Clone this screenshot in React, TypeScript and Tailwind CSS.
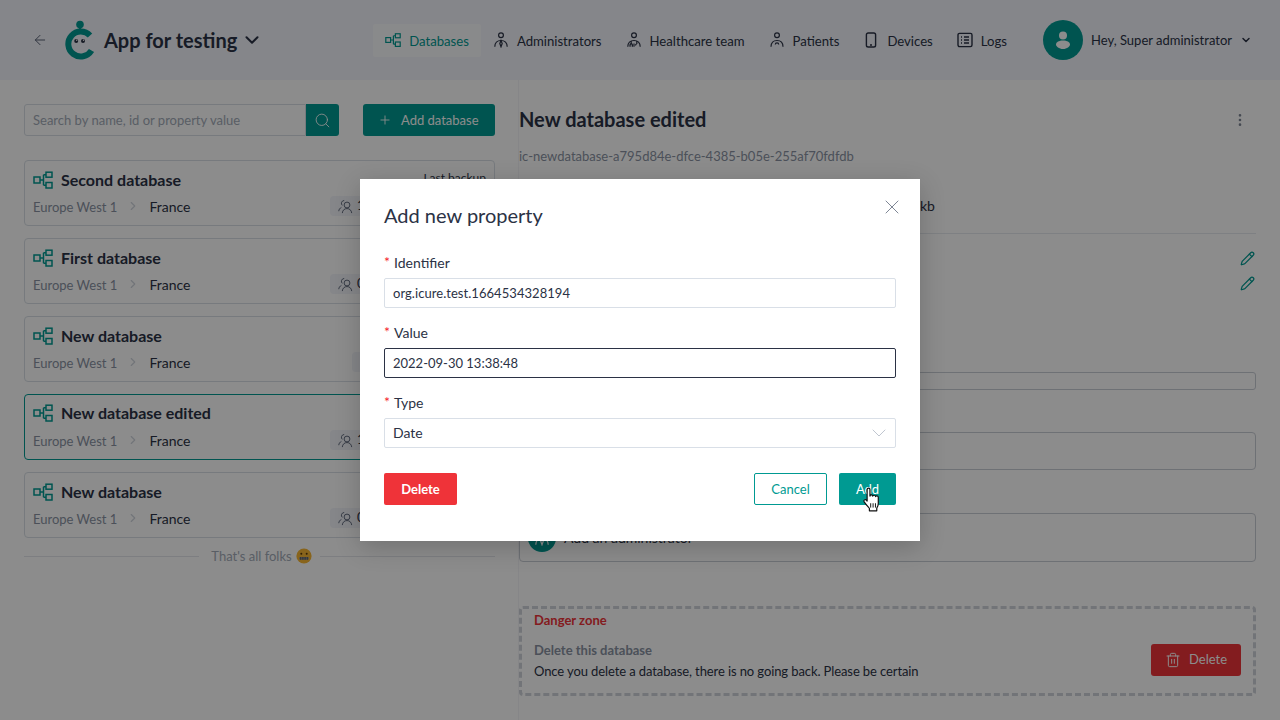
import React from "react";
import { ArrowLeft, ChevronDown, ChevronRight, EllipsisVertical, Pencil, Plus, Search, Trash2, X } from "lucide-react";

function DbIcon({ className }: { className?: string }) {
  return (
    <svg viewBox="0 0 20 18" fill="none" stroke="currentColor" strokeWidth="1.5" className={className}>
      <rect x="1" y="6" width="6" height="6" />
      <rect x="13" y="1.2" width="6" height="5" />
      <rect x="13" y="11.5" width="6" height="5.5" />
      <path d="M7 9h3.5M10.5 3.7V14.2M10.5 3.7H13M10.5 14.2H13" />
    </svg>
  );
}

function Logo() {
  return (
    <svg viewBox="0 0 32 40" className="w-8 h-10 shrink-0">
      <circle cx="16" cy="4.5" r="3.8" fill="#009a92" />
      <rect x="14.8" y="6" width="2.4" height="6" fill="#009a92" />
      <path d="M26 15.5A12.5 12.5 0 1 0 27.5 30.5" fill="none" stroke="#009a92" strokeWidth="6" />
      <circle cx="12.2" cy="21" r="2" fill="#2b3245" />
      <circle cx="19" cy="21" r="2" fill="#2b3245" />
      <circle cx="12.7" cy="20.2" r="0.7" fill="#ffffff" />
      <circle cx="19.5" cy="20.2" r="0.7" fill="#ffffff" />
    </svg>
  );
}

function PersonIcon() {
  return (
    <svg viewBox="0 0 16 16" fill="none" stroke="currentColor" strokeWidth="1.2" className="w-4 h-4 shrink-0">
      <circle cx="8" cy="3.2" r="2.4" />
      <path d="M1.8 14.8c0-4 2.4-6.3 6.2-6.3s6.2 2.3 6.2 6.3" />
      <path d="M8 8.5 6.8 11.5 8 14.8l1.2-3.3z" />
    </svg>
  );
}

function HealthIcon() {
  return (
    <svg viewBox="0 0 16 16" fill="none" stroke="currentColor" strokeWidth="1.2" className="w-4 h-4 shrink-0">
      <circle cx="8" cy="3.2" r="2.4" />
      <path d="M1.8 14.8c0-4 2.4-6.3 6.2-6.3s6.2 2.3 6.2 6.3" />
      <path d="M5.2 9v2.5c-1.2.5-1.4 2-1 3.3M5.2 11.5c1.2.5 1.4 2 1 3.3M10.8 9v3M8 11.5v3.3M10.8 12c-.9 0-1.3.8-1.3 1.6" />
    </svg>
  );
}

function PatientIcon() {
  return (
    <svg viewBox="0 0 16 16" fill="none" stroke="currentColor" strokeWidth="1.2" className="w-4 h-4 shrink-0">
      <circle cx="8" cy="3.2" r="2.4" />
      <path d="M2 14.8c0-4 2.3-6.3 6-6.3s6 2.3 6 6.3" />
      <path d="M6.3 12.5a1.7 1.7 0 0 1 3.4 0" />
    </svg>
  );
}

function PhoneIcon() {
  return (
    <svg viewBox="0 0 16 16" fill="none" stroke="currentColor" strokeWidth="1.4" className="w-4 h-4 shrink-0">
      <rect x="3.4" y="1" width="9.2" height="14" rx="1.8" />
      <path d="M7 13h2" />
    </svg>
  );
}

function LogsIcon() {
  return (
    <svg viewBox="0 0 16 16" fill="none" stroke="currentColor" strokeWidth="1.4" className="w-4 h-4 shrink-0">
      <rect x="1" y="1.4" width="14" height="13.2" rx="1.5" />
      <path d="M4 5h1M7 5h5M4 8h1M7 8h5M4 11h1M7 11h5" />
    </svg>
  );
}

function PeopleIcon() {
  return (
    <svg viewBox="0 0 16 16" fill="none" stroke="#5b6478" strokeWidth="1" className="w-[15px] h-[15px] shrink-0">
      <circle cx="9.6" cy="6.4" r="3.1" />
      <path d="M4.6 15c.3-3 2.2-4.8 5-4.8s4.7 1.8 5 4.8" />
      <path d="M6.6 1.6a3 3 0 0 0-2 5.2M3.6 9C2 9.8 1 11 .8 13" />
    </svg>
  );
}

function ZipEmoji() {
  return (
    <svg viewBox="0 0 16 16" className="w-4 h-4 shrink-0">
      <circle cx="8" cy="8" r="7.6" fill="#f7b733" />
      <circle cx="5.3" cy="5.8" r="1" fill="#5b3a0a" />
      <circle cx="10.7" cy="5.8" r="1" fill="#5b3a0a" />
      <rect x="3.2" y="9" width="9.6" height="2.8" rx="1" fill="#8b8f96" />
      <path d="M4.5 9v2.8M6.3 9v2.8M8 9v2.8M9.7 9v2.8M11.5 9v2.8" stroke="#444" strokeWidth="0.6" />
    </svg>
  );
}

function HandCursor() {
  return (
    <svg viewBox="0 0 20 24" className="absolute left-[861px] top-[487px] w-[22px] h-[26px]">
      <path
        d="M5.5 2.2c0-1.6 2.6-1.6 2.6 0v6.2c.2-1.5 2.5-1.4 2.6.1.3-1.3 2.5-1.2 2.6.3.5-1 2.4-.8 2.5.7v5.7c0 2-.7 3-1.4 4.2v2.6H7.6v-2.2c-1.2-1.5-3-3.4-4.8-6.1-.9-1.5.9-2.8 2-1.6l.7.9z"
        fill="#ffffff"
        stroke="#111111"
        strokeWidth="1.1"
        strokeLinejoin="round"
      />
      <path d="M8.8 15v4M11 15v4M13.2 15v4" stroke="#111111" strokeWidth="0.9" />
    </svg>
  );
}

const navItems = [
  { label: "Administrators", icon: <PersonIcon /> },
  { label: "Healthcare team", icon: <HealthIcon /> },
  { label: "Patients", icon: <PatientIcon /> },
  { label: "Devices", icon: <PhoneIcon /> },
  { label: "Logs", icon: <LogsIcon /> },
];

const databases = [
  { name: "Second database", count: "1", badge: "w-[156px]", selected: false, backup: true },
  { name: "First database", count: "0", badge: "w-[156px]", selected: false, backup: false },
  { name: "New database", count: "0", badge: "w-[134px]", selected: false, backup: false },
  { name: "New database edited", count: "1", badge: "w-[156px]", selected: true, backup: false },
  { name: "New database", count: "0", badge: "w-[156px]", selected: false, backup: false },
];

function DatabaseCard({ db }: { db: (typeof databases)[number] }) {
  return (
    <div
      className={`h-[66px] rounded-[4px] border bg-white pl-2 pr-2 ${
        db.selected ? "border-[#009a92] pt-[6px]" : "border-[#d9dee6] pt-[7px]"
      }`}
    >
      <div className="flex items-center h-6">
        <DbIcon className="w-5 h-[18px] text-[#009a92] shrink-0" />
        <span className="ml-2 text-[16px] font-bold text-[#2b3245]">{db.name}</span>
        {db.backup && <span className="ml-auto self-start mt-[1px] text-[12px] leading-[18px] text-[#2b3245]">Last backup</span>}
      </div>
      <div className={`flex items-center justify-between h-5 ${db.selected ? "mt-[5px]" : "mt-[4px]"}`}>
        <div className="flex items-center">
          <span className="mt-[4px] text-[13px] text-[#8a93a3]">Europe West 1</span>
          <ChevronRight className="w-3.5 h-3.5 mx-[9px] text-[#d0d5dd]" />
          <span className="text-[#2b3245]">France</span>
        </div>
        <div className={`flex items-center h-[20px] rounded-[4px] bg-[#f2f4fa] pl-2 gap-1 text-[13px] text-[#2b3245] ${db.badge}`}>
          <PeopleIcon />
          <span>{db.count}</span>
        </div>
      </div>
    </div>
  );
}

function Field({ label, children }: { label: string; children: React.ReactNode }) {
  return (
    <div>
      <div className="flex items-center h-[18px] text-[14px] text-[#2b3245]">
        <span className="relative -top-[1px] w-[10px] text-[14px] text-[#f5222d]">*</span>
        <span>{label}</span>
      </div>
      <div className="mt-[7px]">{children}</div>
    </div>
  );
}

export default function App() {
  return (
    <div className="relative h-[720px] w-[1280px] overflow-hidden bg-white font-['Lato',sans-serif] text-[14px] text-[#2b3245] whitespace-nowrap">
      {/* Header */}
      <header className="flex items-center h-20 bg-[#f2f4fb] pl-8 pr-7">
        <ArrowLeft className="w-4 h-4 shrink-0 text-[#5b6478]" strokeWidth={1.5} />
        <div className="ml-4">
          <Logo />
        </div>
        <span className="ml-2 text-[20px] font-bold text-[#2b3245]">App for testing</span>
        <ChevronDown className="ml-1 w-[22px] h-[22px] text-[#2b3245]" strokeWidth={2.2} />

        <nav className="ml-auto flex items-center text-[13.15px]">
          <div className="flex items-center gap-2 h-[33px] px-3 rounded-[2px] bg-white/60 text-[#009a92]">
            <DbIcon className="w-4 h-4" />
            <span className="pt-[4px]">Databases</span>
          </div>
          {navItems.map((item) => (
            <div key={item.label} className="flex items-center gap-2 px-3 text-[#2b3245]">
              {item.icon}
              <span className="pt-[4px]">{item.label}</span>
            </div>
          ))}
        </nav>

        <div className="ml-6 flex items-center">
          <div className="flex items-center justify-center w-10 h-10 rounded-full bg-[#009a92]">
            <svg viewBox="0 0 20 20" className="w-5 h-5" fill="#ffffff">
              <circle cx="10" cy="5.5" r="4" />
              <path d="M10 10.5c4 0 7 1.6 7 4 0 2-3 4.5-7 4.5s-7-2.5-7-4.5c0-2.4 3-4 7-4z" />
            </svg>
          </div>
          <span className="ml-2 pt-[2px] text-[13px] text-[#2b3245]">Hey, Super administrator</span>
          <ChevronDown className="ml-2 w-3 h-3 text-[#2b3245]" strokeWidth={3} />
        </div>
      </header>

      <div className="flex h-[640px]">
        {/* Database list */}
        <aside className="w-[519px] shrink-0 border-r border-[#f4f5f8] pl-6 pr-[23px] pt-6">
          <div className="flex items-center text-[13px]">
            <div className="flex items-center w-[282px] h-8 rounded-l-[3px] border border-[#d9dee6] pl-2 pt-[2px] text-[#a3abb8]">
              Search by name, id or property value
            </div>
            <div className="flex items-center justify-center w-[33px] h-8 rounded-r-[3px] bg-[#009a92]">
              <Search className="w-[17px] h-[17px] text-white" strokeWidth={1.25} />
            </div>
            <div className="ml-auto flex items-center w-[132px] h-8 rounded-[3px] bg-[#009a92] pl-[15px] text-white">
              <Plus className="w-[14px] h-[14px]" strokeWidth={1.5} />
              <span className="ml-[9px] pt-[2px]">Add database</span>
            </div>
          </div>

          <div className="mt-6 flex flex-col gap-3">
            {databases.map((db, idx) => (
              <DatabaseCard key={idx} db={db} />
            ))}
          </div>

          <div className="mt-[8px] flex items-center h-5 text-[13px] text-[#a3abb8]">
            <div className="flex-1 h-px bg-[#e3e6ec]" />
            <span className="ml-3 pt-[2px]">That's all folks</span>
            <span className="ml-[4px] mr-2">
              <ZipEmoji />
            </span>
            <div className="flex-1 h-px bg-[#e3e6ec]" />
          </div>
        </aside>

        {/* Database details */}
        <main className="flex-1 pr-6 pt-6 flex flex-col">
          <div className="flex items-center justify-between h-8">
            <h1 className="pb-[2px] text-[20px] font-bold text-[#2b3245]">New database edited</h1>
            <EllipsisVertical className="w-4 h-4 mr-2 text-[#7d8594]" />
          </div>
          <div className="mt-[10px] h-5 text-[13px] leading-5 text-[#8a93a3]">ic-newdatabase-a795d84e-dfce-4385-b05e-255af70fdfdb</div>
          <div className="mt-[30px] h-5 pl-[401px] leading-5">kb</div>
          <div className="mt-[17px] h-px bg-[#e6e9ee]" />
          <div className="mt-[14px] flex justify-end pr-[1px] h-5 items-center">
            <Pencil className="w-[15px] h-[15px] text-[#009a92]" />
          </div>
          <div className="mt-[5px] flex justify-end pr-[1px] h-5 items-center">
            <Pencil className="w-[15px] h-[15px] text-[#009a92]" />
          </div>
          <div className="mt-[79px] h-[18px] rounded-[3px] border border-[#c9ced6]" />
          <div className="mt-[42px] h-[38px] rounded-[4px] border border-[#c9ced6]" />
          <div className="mt-[43px] flex items-center h-[49px] rounded-[4px] border border-[#c9ced6] pl-2">
            <div className="flex items-center justify-center w-7 h-7 rounded-full bg-[#009a92] text-white">
              <PersonIcon />
            </div>
            <span className="ml-2">Add an administrator</span>
          </div>
          <div className="mt-[44px] flex items-start justify-between h-[90px] rounded-[4px] border-[3px] border-dashed border-[#d0d4da] pl-3 pr-[12px]">
            <div>
              <div className="mt-[1px] h-5 text-[13px] leading-5 font-bold text-[#ef3339]">Danger zone</div>
              <div className="mt-[10px] h-5 text-[13px] leading-5 font-bold text-[#8a93a3]">Delete this database</div>
              <div className="mt-[1px] h-5 text-[13px] leading-5 tracking-[-0.1px]">Once you delete a database, there is no going back. Please be certain</div>
            </div>
            <div className="mt-[35px] flex items-center justify-center gap-2 w-[90px] h-8 rounded-[3px] bg-[#ef3339] text-[13px] text-white">
              <Trash2 className="w-4 h-4" strokeWidth={1.5} />
              <span className="pb-[1px]">Delete</span>
            </div>
          </div>
        </main>
      </div>

      {/* Modal */}
      <div className="absolute inset-0 flex items-center justify-center bg-black/45">
        <div className="relative w-[560px] h-[362px] bg-white px-6 pt-[23px] shadow-[0_6px_24px_rgba(0,0,0,0.2)]">
          <X className="absolute right-[16px] top-[16px] w-6 h-6 text-[#7d8594]" strokeWidth={1} />
          <h2 className="h-[26px] text-[20px] leading-[26px] text-[#2b3245]">Add new property</h2>
          <div className="mt-[25px] flex flex-col gap-[15px]">
            <Field label="Identifier">
              <div className="flex items-center h-[30px] rounded-[2px] border border-[#d9dfe7] pl-2 pt-[2px] text-[13px] tracking-[0.05px]">org.icure.test.1664534328194</div>
            </Field>
            <Field label="Value">
              <div className="flex items-center h-[30px] rounded-[2px] border border-[#2b3245] pl-2 pt-[2px] text-[13px]">2022-09-30 13:38:48</div>
            </Field>
            <Field label="Type">
              <div className="flex items-center justify-between h-[30px] rounded-[2px] border border-[#d9dfe7] pl-2 pr-[4px]">
                <span className="pb-[2px]">Date</span>
                <ChevronDown className="w-6 h-6 text-[#c0c6d0]" strokeWidth={1} />
              </div>
            </Field>
          </div>
          <div className="mt-[25px] flex items-center text-[13px]">
            <div className="flex items-center justify-center w-[73px] h-8 pt-[2px] rounded-[2px] bg-[#ef3339] font-bold text-white">Delete</div>
            <div className="ml-auto flex items-center justify-center w-[73px] h-8 pt-[2px] rounded-[2px] border border-[#009a92] text-[#009a92]">Cancel</div>
            <div className="ml-3 flex items-center justify-center w-[57px] h-8 pt-[2px] rounded-[2px] bg-[#009a92] text-white">Add</div>
          </div>
        </div>
        <HandCursor />
      </div>
    </div>
  );
}
